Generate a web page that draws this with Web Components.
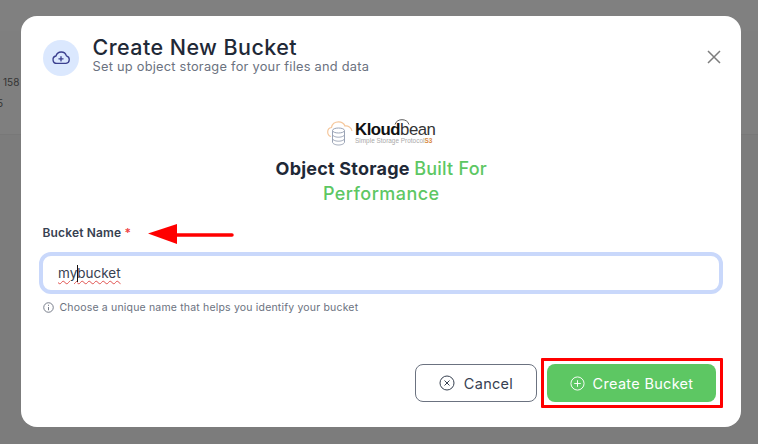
<!doctype html>
<html><head><meta charset="utf-8"><style>
html,body{margin:0;height:100%;overflow:hidden;background:#7f7f7f}
body{font-family:Inter,"Liberation Sans",sans-serif}
</style></head><body>
<app-backdrop>
  <bucket-modal></bucket-modal>
</app-backdrop>
<script>
const S='font-family:Inter,"Liberation Sans",sans-serif;';
class AppBackdrop extends HTMLElement{constructor(){super();this.attachShadow({mode:'open'}).innerHTML=`<style>
:host{display:block;width:758px;height:444px;position:relative;background:#7c7c7c;overflow:hidden;${S}}
.top{height:31px;background:#808080}
.band{height:104px;background:#7f7f7f;border-bottom:1px solid #787878;box-sizing:border-box;font-size:10px;color:#333;padding:45px 0 0 3px;line-height:12px}
.band div+div{margin-top:9px;margin-left:-6px}
.wrap{position:absolute;inset:16px 17px 17px 21px}
</style><div class="top"></div><div class="band"><div>158</div><div>5</div></div><div class="wrap"><slot></slot></div>`}}
customElements.define('app-backdrop',AppBackdrop);

class LogoMark extends HTMLElement{constructor(){super();this.attachShadow({mode:'open'}).innerHTML=`<style>
:host{display:flex;align-items:center;justify-content:center;height:26px;position:relative}
svg{display:block;flex:none}
.t{margin-left:2px;display:flex;flex-direction:column;font-family:"Liberation Sans",sans-serif;position:relative}
.n{font-size:16.800px;line-height:14px;color:#111;letter-spacing:-.5px;margin-top:2px;white-space:nowrap}
.n b{font-weight:700}.n span{font-weight:400;color:#333}
.s{font-size:6.400px;line-height:8px;color:#a9a9a9;white-space:nowrap;letter-spacing:.02px}
.s i{font-style:normal;color:#d9893f;font-weight:700}
.arc{position:absolute;left:39px;top:-2px}
</style><svg width="26" height="25" viewBox="0 0 26 25" fill="none">
<path d="M4 15.500C2 15 .7 13 .7 11C.7 8.500 2.500 6.800 4.500 6.500C5 3 8 .8 11.500.8C14.500.8 17 2.300 18 5C21 4.500 24.500 6.500 25 10" stroke="#f5c79c" stroke-width="1.200"/>
<g stroke="#9aa3b5" stroke-width="1" fill="#fff"><path d="M5.500 9.500V21C5.500 22.800 8.500 24 11.500 24C14.500 24 17.500 22.800 17.500 21V9.500"/><ellipse cx="11.500" cy="9.500" rx="6" ry="2.500"/><path d="M5.500 13.500C5.500 15 8.500 16.200 11.500 16.200C14.500 16.200 17.500 15 17.500 13.500M5.500 17.500C5.500 19 8.500 20.200 11.500 20.200C14.500 20.200 17.500 19 17.500 17.500" fill="none"/></g></svg>
<div class="t"><div class="n"><b>Kloud</b><span>bean</span></div><div class="s">Simple Storage Protocol<i>S3</i></div>
<svg class="arc" width="16" height="6" viewBox="0 0 16 6" fill="none" stroke="#333" stroke-width=".8"><path d="M1 5.500C2 2 5 .7 8 .7C11 .7 14 2 15 5.500"/></svg></div>`}}
customElements.define('logo-mark',LogoMark);

class BucketModal extends HTMLElement{constructor(){super();this.attachShadow({mode:'open'}).innerHTML=`<style>
:host{display:flex;flex-direction:column;box-sizing:border-box;height:411px;width:720px;background:#fff;border-radius:16px;padding:19px 21px 25px 21.500px;position:relative;color:#1f2937}
header{display:flex;align-items:center;gap:14px;height:44px}
.ic{width:36px;height:36px;border-radius:50%;background:#dbe8fe;display:flex;align-items:center;justify-content:center;flex:none;margin-top:1px}
.tt{padding-bottom:4px}
h2{margin:0;font-size:21.500px;line-height:24px;font-weight:500;color:#1f2937;letter-spacing:.43px;white-space:nowrap}
.sub{font-size:12.800px;line-height:16px;color:#6b7280;letter-spacing:.25px;margin-top:.5px;white-space:nowrap}
.x{margin-left:auto;margin-right:-2px;display:flex}
.hero{margin-top:41px;display:flex;flex-direction:column;align-items:center}
h3{margin:10px 0 0;width:260px;text-align:center;font-size:18px;line-height:25px;font-weight:700;color:#1f2937;letter-spacing:.22px}
h3 span{color:#5dc763;font-weight:500}
h3 div{height:25px}
h3 div+div{letter-spacing:.46px}
label{display:block;margin-top:19px;font-size:12px;line-height:16px;font-weight:600;color:#374151;letter-spacing:.15px}
label em{font-style:normal;color:#ef4444}
.arrow{position:absolute;left:127px;top:208px}
.input{box-sizing:border-box;height:42px;margin:11px 0 0 -3.500px;width:684px;border-radius:12px;border:4px solid #c9d8fb;background:#fff;padding:0 15px;display:flex;align-items:center;font-size:13.500px;color:#374151}
.input span{text-decoration:underline wavy #e0524f 1px;text-underline-offset:2px;white-space:pre}
.caret{display:inline-block;width:1px;height:17px;background:#111;margin-right:-1px;flex:none}
.hint{display:flex;align-items:center;gap:6px;margin-top:6px;font-size:10.500px;line-height:15px;color:#6b7280;letter-spacing:.18px}
.acts{margin-top:auto;display:flex;justify-content:flex-end;gap:10px;padding-right:4px}
button{font:inherit;box-sizing:border-box;height:38px;border-radius:8px;display:flex;align-items:center;justify-content:center;gap:9px;font-size:14.500px;font-weight:400;letter-spacing:.3px;padding:0;position:relative}
.c{width:122px;background:#fff;border:1px solid #6b7280;color:#374151}
.p{width:169px;background:#5dc763;border:0;color:#fff;gap:8px}
.p::after{content:"";position:absolute;left:-6px;top:-6px;width:182px;height:50px;border:3px solid #f00;box-sizing:border-box;border-radius:1px}
</style>
<header><div class="ic"><svg width="20" height="20" viewBox="0 0 24 24" fill="none" stroke="#3b3f8f" stroke-width="1.600" stroke-linecap="round" stroke-linejoin="round"><path d="M7 18.500a4.500 4.500 0 0 1-1-8.900A6.500 6.500 0 0 1 18.500 9.500 4.600 4.600 0 0 1 18 18.500Z"/><path d="M12 10.500v5M9.500 13h5"/></svg></div>
<div class="tt"><h2>Create New Bucket</h2><div class="sub">Set up object storage for your files and data</div></div>
<div class="x"><svg width="16" height="16" viewBox="0 0 16 16" stroke="#7d7d7d" stroke-width="1.500" fill="none"><path d="M2 2 14 14M14 2 2 14"/></svg></div></header>
<div class="hero"><logo-mark></logo-mark><h3><div>Object Storage <span>Built For</span></div><div><span>Performance</span></div></h3></div>
<label>Bucket Name <em>*</em></label>
<svg class="arrow" width="86" height="21" viewBox="0 0 86 21"><path d="M84 11H25" stroke="#f00" stroke-width="3.500" stroke-linecap="round"/><path d="M0 9.500 29 0V20Z" fill="#f00"/></svg>
<div class="input"><span>my</span><i class="caret"></i><span>bucket</span></div>
<div class="hint"><svg width="11" height="11" viewBox="0 0 12 12" fill="none" stroke="#6b7280"><circle cx="6" cy="6" r="5.200"/><path d="M6 5.500V9M6 3v1.200"/></svg><span>Choose a unique name that helps you identify your bucket</span></div>
<div class="acts"><button class="c"><svg width="16" height="16" viewBox="0 0 16 16" fill="none" stroke="#374151" stroke-width="1"><circle cx="8" cy="8" r="7"/><path d="M5.500 5.500l5 5M10.500 5.500l-5 5"/></svg>Cancel</button>
<button class="p"><svg width="15" height="15" viewBox="0 0 16 16" fill="none" stroke="#fff" stroke-width="1"><circle cx="8" cy="8" r="7"/><path d="M8 4.500v7M4.500 8h7"/></svg>Create Bucket</button></div>`}}
customElements.define('bucket-modal',BucketModal);
</script></body></html>
